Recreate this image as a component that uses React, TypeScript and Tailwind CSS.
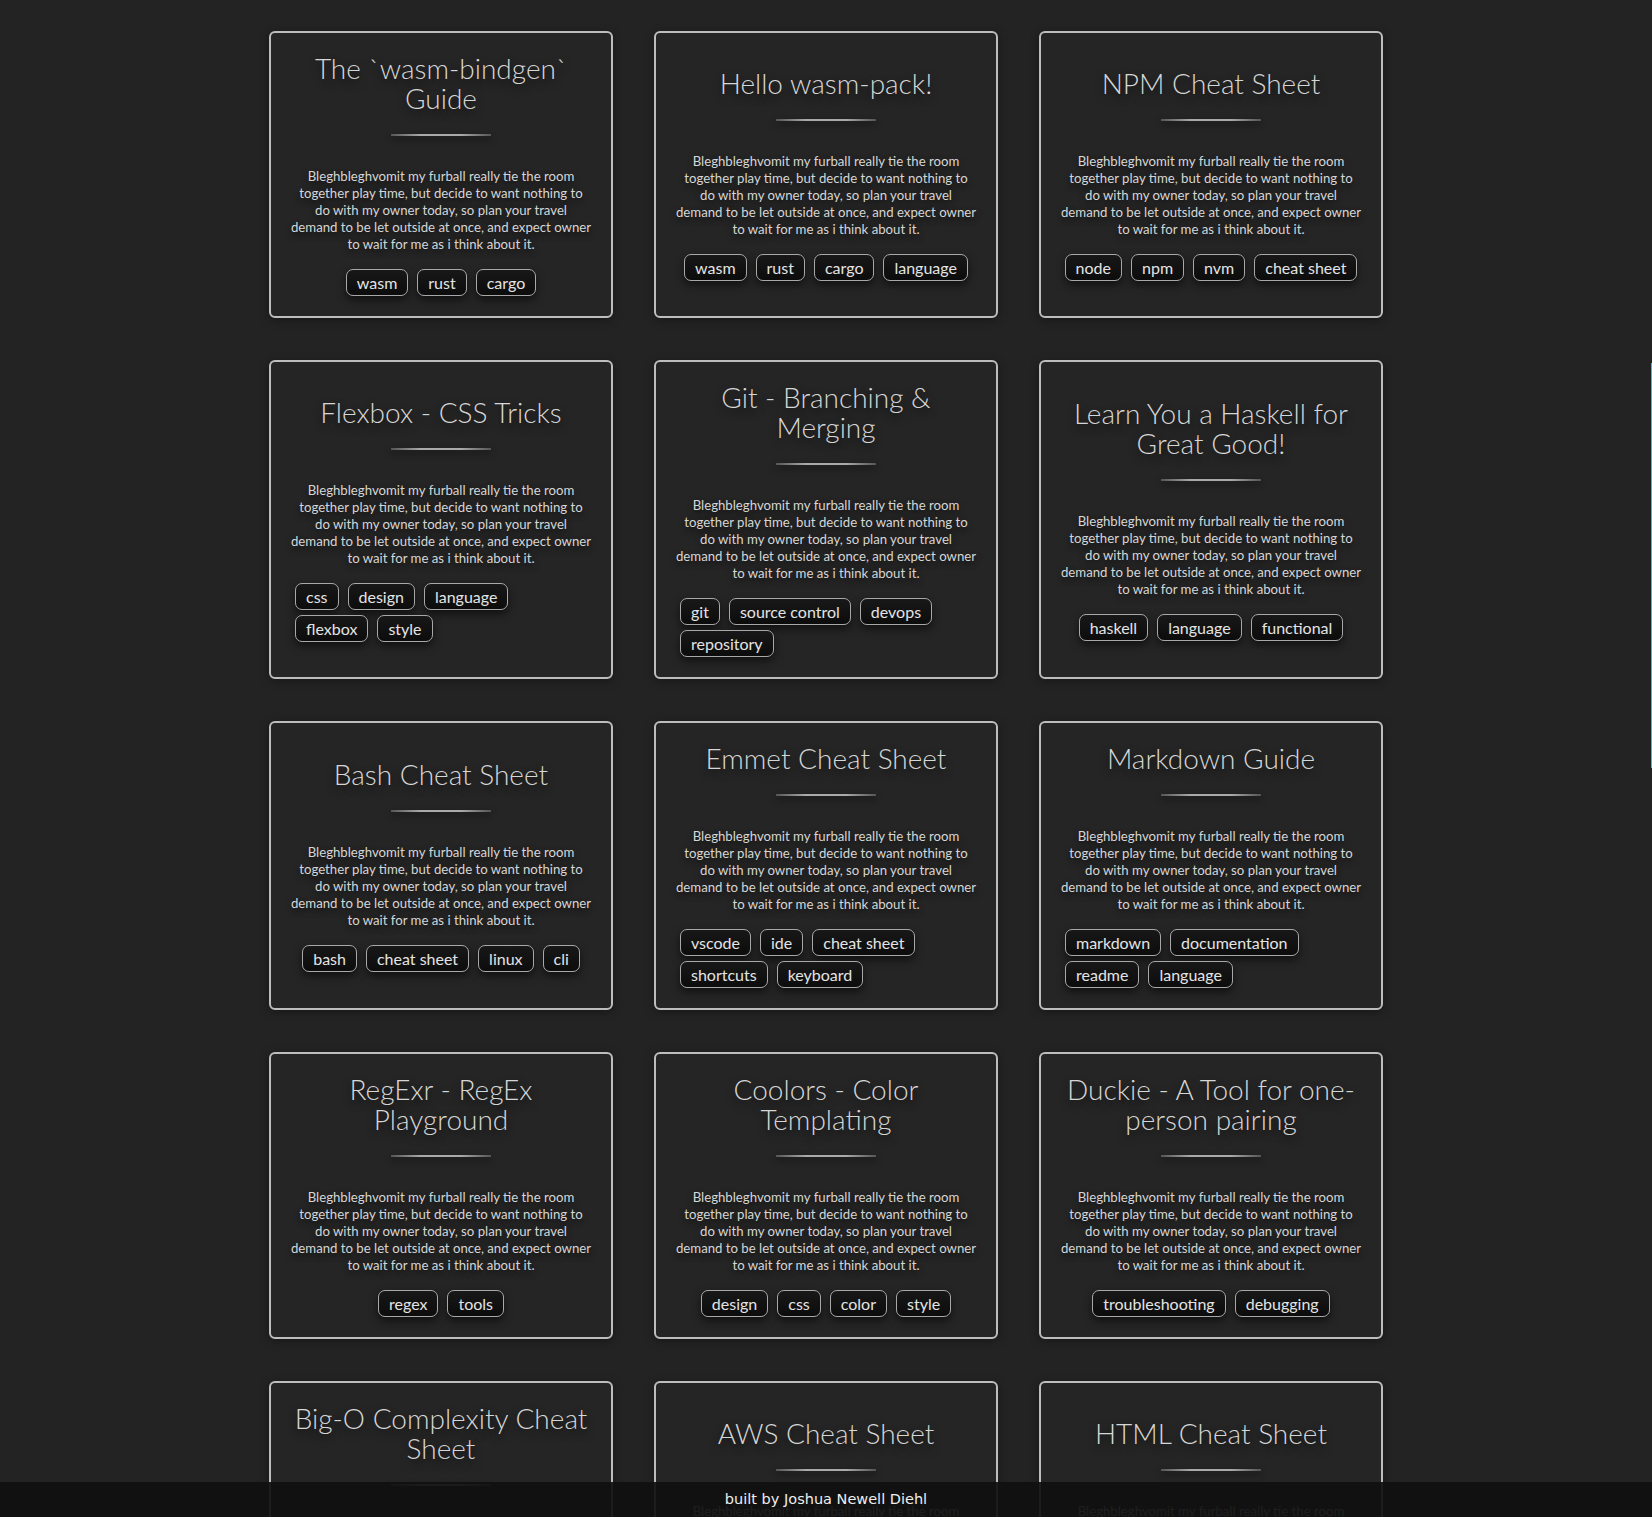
import React from "react";

type Card = { title: string; tags: string[][] };

const cards: Card[] = [
  { title: "The `wasm-bindgen` Guide", tags: [["wasm", "rust", "cargo"]] },
  { title: "Hello wasm-pack!", tags: [["wasm", "rust", "cargo", "language"]] },
  { title: "NPM Cheat Sheet", tags: [["node", "npm", "nvm", "cheat sheet"]] },
  { title: "Flexbox - CSS Tricks", tags: [["css", "design", "language"], ["flexbox", "style"]] },
  { title: "Git - Branching & Merging", tags: [["git", "source control", "devops"], ["repository"]] },
  { title: "Learn You a Haskell for Great Good!", tags: [["haskell", "language", "functional"]] },
  { title: "Bash Cheat Sheet", tags: [["bash", "cheat sheet", "linux", "cli"]] },
  { title: "Emmet Cheat Sheet", tags: [["vscode", "ide", "cheat sheet"], ["shortcuts", "keyboard"]] },
  { title: "Markdown Guide", tags: [["markdown", "documentation"], ["readme", "language"]] },
  { title: "RegExr - RegEx Playground", tags: [["regex", "tools"]] },
  { title: "Coolors - Color Templating", tags: [["design", "css", "color", "style"]] },
  { title: "Duckie - A Tool for one-person pairing", tags: [["troubleshooting", "debugging"]] },
  { title: "Big-O Complexity Cheat Sheet", tags: [["algorithms", "complexity"]] },
  { title: "AWS Cheat Sheet", tags: [["aws", "cloud", "cheat sheet"]] },
  { title: "HTML Cheat Sheet", tags: [["html", "cheat sheet"]] },
];

const lines = [
  "Bleghbleghvomit my furball really tie the room",
  "together play time, but decide to want nothing to",
  "do with my owner today, so plan your travel",
  "demand to be let outside at once, and expect owner",
  "to wait for me as i think about it.",
];

function Tag({ t }: { t: string }) {
  return (
    <span className="flex h-[27px] items-center rounded-[7px] border border-[#a8a8a8] bg-[linear-gradient(180deg,#181818,#0c0c0c)] px-[10px] text-[16px] leading-none text-[#e4e4e4] shadow-[0_4px_8px_rgba(0,0,0,0.55)]">
      {t}
    </span>
  );
}

function CardView({ card }: { card: Card }) {
  const multi = card.tags.length > 1;
  return (
    <div className="flex flex-col items-center justify-center rounded-[6px] border-2 border-[#bdbdbd] bg-[#252525] px-[18px] py-[20px] shadow-[0_2px_10px_rgba(0,0,0,0.35)]">
      <h2 className="text-center text-[28px] font-light leading-[30px] text-[#d6d6d6] [text-shadow:0_4px_8px_rgba(0,0,0,0.7)]">
        {card.title}
      </h2>
      <div className="mt-[21px] h-[2px] w-[100px] bg-[linear-gradient(90deg,#555,#aaa_30%,#aaa_70%,#555)] shadow-[0_3px_6px_rgba(0,0,0,0.6)]" />
      <p className="mt-[32px] text-center text-[13.2px] leading-[17px] text-[#d6d6d6] [text-shadow:0_3px_6px_rgba(0,0,0,0.6)] whitespace-nowrap">
        {lines.map((l, i) => (
          <span key={i} className="block">
            {l}
          </span>
        ))}
      </p>
      <div
        className={
          multi
            ? "mt-[16px] flex flex-col gap-y-[5px] self-stretch pl-[6px]"
            : "mt-[16px] flex flex-col items-center self-stretch"
        }
      >
        {card.tags.map((row, i) => (
          <div key={i} className="flex gap-x-[9px]">
            {row.map((t) => (
              <Tag key={t} t={t} />
            ))}
          </div>
        ))}
      </div>
    </div>
  );
}

export default function App() {
  return (
    <div
      className="relative h-[1517px] w-full overflow-hidden bg-[#232323]"
      style={{ fontFamily: "Lato, 'Open Sans', sans-serif" }}
    >
      <div className="mx-auto grid w-[1114px] grid-cols-[344px_344px_344px] gap-x-[41px] gap-y-[42px] pt-[31px]">
        {cards.map((c) => (
          <CardView key={c.title} card={c} />
        ))}
      </div>
      <div className="absolute right-0 top-[363px] h-[405px] w-px bg-[#27c4dd]" />
      <div
        className="absolute bottom-0 left-0 flex h-[35px] w-full items-center justify-center bg-[rgba(16,16,16,0.93)] text-[14.5px] text-[#eeeeee]"
        style={{ fontFamily: "'DejaVu Sans', sans-serif" }}
      >
        built by Joshua Newell Diehl
      </div>
    </div>
  );
}
